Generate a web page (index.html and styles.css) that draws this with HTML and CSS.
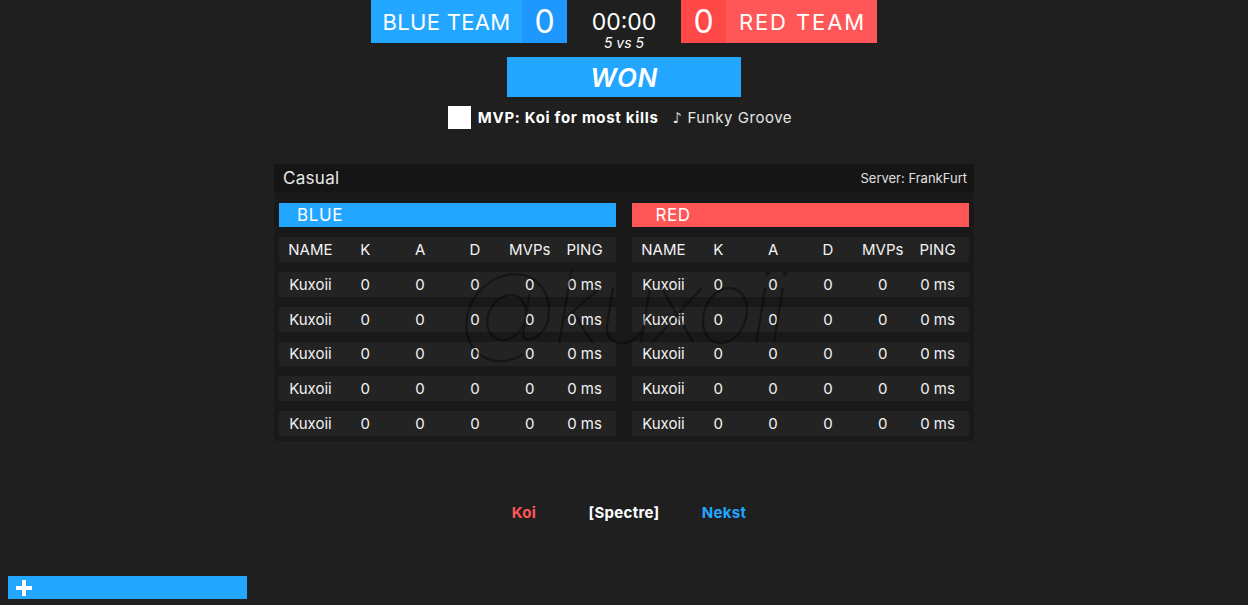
FILE: index.html
```html
<!DOCTYPE html>
<html>
<head>
<meta charset="utf-8">
<link rel="stylesheet" href="styles.css">
</head>
<body>
<div class="page">
  <header class="scorebar">
    <div class="team-label blue">BLUE TEAM</div>
    <div class="team-score blue-dark">0</div>
    <div class="timer">
      <div class="clock">00:00</div>
      <div class="mode">5 vs 5</div>
    </div>
    <div class="team-score red-dark">0</div>
    <div class="team-label red wide">RED TEAM</div>
  </header>

  <div class="result">WON</div>

  <div class="mvp">
    <span class="avatar"></span>
    <span class="mvp-text">MVP: Koi for most kills</span>
    <span class="song">♪ Funky Groove</span>
  </div>

  <section class="board">
    <div class="board-head">
      <span class="board-mode">Casual</span>
      <span class="board-server">Server: FrankFurt</span>
    </div>
    <div class="teams">
      <div class="team">
        <div class="team-bar blue"><span class="team-name">BLUE</span></div>
        <div class="row head"><span>NAME</span><span>K</span><span>A</span><span>D</span><span>MVPs</span><span>PING</span></div>
        <div class="row"><span>Kuxoii</span><span>0</span><span>0</span><span>0</span><span>0</span><span>0 ms</span></div>
        <div class="row"><span>Kuxoii</span><span>0</span><span>0</span><span>0</span><span>0</span><span>0 ms</span></div>
        <div class="row"><span>Kuxoii</span><span>0</span><span>0</span><span>0</span><span>0</span><span>0 ms</span></div>
        <div class="row"><span>Kuxoii</span><span>0</span><span>0</span><span>0</span><span>0</span><span>0 ms</span></div>
        <div class="row"><span>Kuxoii</span><span>0</span><span>0</span><span>0</span><span>0</span><span>0 ms</span></div>
      </div>
      <div class="team">
        <div class="team-bar red"><span class="team-name">RED</span></div>
        <div class="row head"><span>NAME</span><span>K</span><span>A</span><span>D</span><span>MVPs</span><span>PING</span></div>
        <div class="row"><span>Kuxoii</span><span>0</span><span>0</span><span>0</span><span>0</span><span>0 ms</span></div>
        <div class="row"><span>Kuxoii</span><span>0</span><span>0</span><span>0</span><span>0</span><span>0 ms</span></div>
        <div class="row"><span>Kuxoii</span><span>0</span><span>0</span><span>0</span><span>0</span><span>0 ms</span></div>
        <div class="row"><span>Kuxoii</span><span>0</span><span>0</span><span>0</span><span>0</span><span>0 ms</span></div>
        <div class="row"><span>Kuxoii</span><span>0</span><span>0</span><span>0</span><span>0</span><span>0 ms</span></div>
      </div>
    </div>
    <div class="watermark">@kuxoii</div>
  </section>

  <div class="players">
    <span class="player red-text">Koi</span>
    <span class="player">[Spectre]</span>
    <span class="player blue-text">Nekst</span>
  </div>
</div>

<button class="add-btn" aria-label="add">
  <svg width="16" height="16" viewBox="0 0 16 16"><path d="M6 0h4v6h6v4h-6v6h-4v-6h-6v-4h6z" fill="#fff"/></svg>
</button>
</body>
</html>
```

FILE: styles.css
```css
* { box-sizing: border-box; }
html, body {
  margin: 0;
  padding: 0;
  background: #1f1f1f;
  color: #fff;
  font-family: "Inter", "DejaVu Sans", sans-serif;
}
.page {
  display: flex;
  flex-direction: column;
  align-items: center;
  width: 1248px;
  height: 605px;
}
.scorebar {
  display: flex;
  height: 43px;
}
.team-label {
  width: 151px;
  display: flex;
  align-items: center;
  justify-content: center;
  font-size: 22px;
  letter-spacing: 0.3px;
}
.team-label.wide { letter-spacing: 1.9px; padding-left: 2px; }
.team-score {
  width: 45px;
  display: flex;
  align-items: center;
  justify-content: center;
  font-size: 32px;
}
.blue { background: #22a6ff; }
.red { background: #ff5757; }
.blue-dark { background: #1e98ff; }
.red-dark { background: #ff4848; }
.timer {
  width: 114px;
  display: flex;
  flex-direction: column;
  align-items: center;
}
.clock {
  font-size: 23px;
  line-height: 26px;
  margin-top: 9px;
}
.mode {
  font-size: 14px;
  font-style: italic;
  line-height: 16px;
}
.result {
  margin-top: 14px;
  width: 234px;
  height: 40px;
  background: #22a6ff;
  display: flex;
  align-items: center;
  justify-content: center;
  font-size: 26px;
  font-weight: 600;
  font-style: italic;
  letter-spacing: 0.5px;
}
.mvp {
  margin-top: 9px;
  display: flex;
  align-items: center;
  height: 23px;
  font-size: 15px;
  padding-right: 8px;
}
.avatar {
  width: 23px;
  height: 23px;
  background: #fff;
  margin-right: 7px;
}
.mvp-text { font-weight: 700; margin-right: 14px; letter-spacing: 0.7px; }
.song { color: #e6e6e6; letter-spacing: 0.55px; }

.board {
  position: relative;
  margin-top: 35px;
  width: 700px;
  background: #191919;
  padding: 0 5px 5px;
}
.board-head {
  margin: 0 -5px;
  height: 28px;
  background: #151515;
  display: flex;
  align-items: center;
  justify-content: space-between;
  padding: 0 7px 0 9px;
}
.board-mode { font-size: 17px; color: #e8e8e8; letter-spacing: 0.3px; }
.board-server { font-size: 13px; color: #e0e0e0; }
.teams {
  display: flex;
  gap: 16px;
  margin-top: 11px;
}
.team {
  flex: 1;
  display: flex;
  flex-direction: column;
  gap: 10px;
}
.team-bar {
  height: 24px;
  display: flex;
  align-items: center;
}
.team-name {
  width: 82px;
  text-align: center;
  font-size: 17px;
  letter-spacing: 0.6px;
}
.row {
  height: 24.75px;
  background: #232323;
  display: grid;
  grid-template-columns: repeat(6, 1fr);
  padding: 0 4px;
  align-items: center;
  font-size: 15px;
  color: #f2f2f2;
}
.row.head { height: 25px; }
.row span { text-align: center; white-space: nowrap; }
.watermark {
  position: absolute;
  left: 185px;
  top: 82px;
  font-size: 100px;
  font-weight: 100;
  font-style: italic;
  color: rgba(0, 0, 0, 0.4);
  pointer-events: none;
  letter-spacing: -4px;
}
.players {
  margin-top: 62px;
  display: grid;
  grid-template-columns: repeat(3, 100px);
  justify-items: center;
  font-size: 15px;
  font-weight: 700;
  letter-spacing: 0.3px;
}
.red-text { color: #ff5757; }
.blue-text { color: #22a6ff; }
.add-btn {
  position: fixed;
  left: 8px;
  bottom: 6px;
  width: 239px;
  height: 23px;
  background: #22a6ff;
  border: 0;
  padding: 0 0 0 8px;
  display: flex;
  align-items: center;
  cursor: pointer;
}
```
